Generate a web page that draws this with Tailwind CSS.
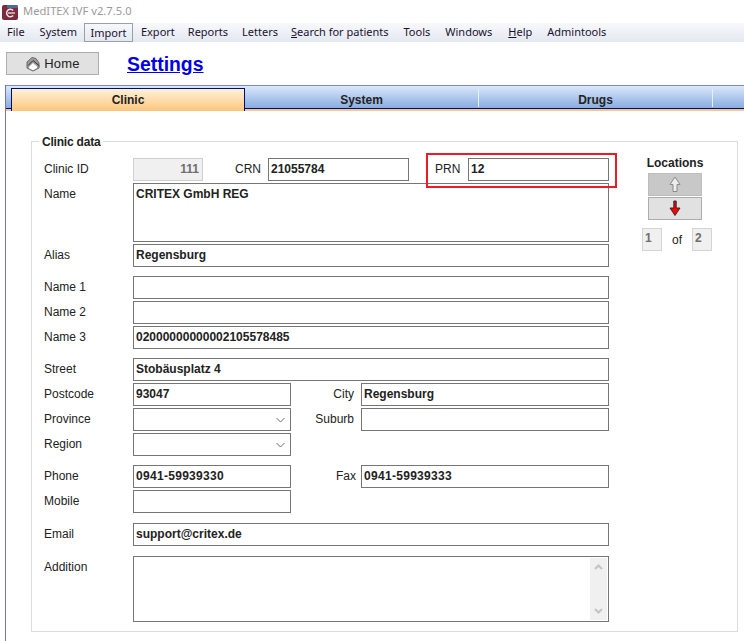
<!DOCTYPE html>
<html>
<head>
  <meta charset="UTF-8">
  <title>MedITEX IVF</title>
  <script src="https://cdn.jsdelivr.net/npm/@tailwindcss/browser@4"></script>
</head>
<body class="bg-white">
<div class="relative w-[744px] h-[641px] overflow-hidden bg-white font-['Liberation_Sans',Arial,sans-serif] text-[12px] text-[#222]">

  <!-- window title -->
  <div class="flex items-center h-[23px] pl-[2px]">
    <svg width="16" height="16" viewBox="0 0 16 16" class="mt-[1px]">
      <rect x="0" y="1" width="16" height="15" rx="2" fill="#7b2b3c"/>
      <path d="M5 1 H14 Q16 1 16 3 V4 H5 Z" fill="#4a6a9c"/>
      <path d="M11.2 6.4 A3.8 3.8 0 1 0 11.2 11.6" fill="none" stroke="#f4e4e8" stroke-width="1.5"/>
      <path d="M6 9h7" stroke="#f4e4e8" stroke-width="1.3"/>
    </svg>
    <span class="ml-[5px] font-['Noto_Sans',sans-serif] text-[11.2px] text-[#9a9a9a]">MedITEX IVF v2.7.5.0</span>
  </div>

  <!-- menu bar -->
  <div class="flex items-center h-[19px] bg-gradient-to-b from-[#f7f9fc] to-[#e3e8f0] font-['Noto_Sans',sans-serif] text-[11px] text-[#1a1030]">
    <span class="ml-[7px]">File</span>
    <span class="ml-[15px]">System</span>
    <span class="ml-[7px] px-[5.5px] h-[19px] leading-[17px] border border-[#9aa0a8]">Import</span>
    <span class="ml-[8px]">Export</span>
    <span class="ml-[13px]">Reports</span>
    <span class="ml-[14px]">Letters</span>
    <span class="ml-[13px]"><u>S</u>earch for patients</span>
    <span class="ml-[15px]">Tools</span>
    <span class="ml-[15px]">Windows</span>
    <span class="ml-[16px]"><u>H</u>elp</span>
    <span class="ml-[15px]">Admintools</span>
  </div>

  <!-- home + title -->
  <div class="flex items-center h-[43px] pl-[6px]">
    <button class="flex items-center justify-center gap-[3px] w-[93px] h-[23px] bg-[#e1e1e1] border border-[#adadad] text-[#222]">
      <svg width="16" height="16" viewBox="0 0 16 16">
        <path d="M2 6 L7 1.5 L11 2.5 L14 7 L14 12 L8 15 L2 12 Z" fill="#9c9c9c" stroke="#6a6a6a" stroke-width="1"/>
        <path d="M4 11 L8 7 L12 10.5 L12 12 L8 14.2 L4 12.2 Z" fill="#fff"/>
        <path d="M8 4.5 L14.5 10 M8 4.5 L3 9.5" fill="none" stroke="#333" stroke-width="1"/>
      </svg>
      <span class="text-[13px] tracking-[0.2px]">Home</span>
    </button>
    <a class="ml-[28px] mt-[3px] text-[19.4px] font-bold text-[#0000e6] underline">Settings</a>
  </div>

  <!-- tabs -->
  <div class="ml-[5px] border-l border-[#7276b8] h-[556px]">
    <div class="relative flex h-[26px] pl-[5px] pt-[2px] border-t border-[#7a8cc4] bg-gradient-to-b from-[#dbe8fa] to-[#7ea4dc] after:absolute after:left-0 after:right-0 after:bottom-0 after:h-[2px] after:bg-[#f5c98a]">
      <div class="relative z-10 w-[234px] h-[23px] pb-[1px] flex items-center justify-center font-bold border border-b-0 border-[#000a78] bg-gradient-to-b from-[#fff1d8] to-[#fdc67c]">Clinic</div>
      <div class="w-[234px] h-[18px] mt-[1px] pt-[4px] leading-[14px] text-center font-bold border-r border-[#e6eefa]">System</div>
      <div class="w-[234px] h-[18px] mt-[1px] pt-[4px] leading-[14px] text-center font-bold border-r border-[#e6eefa]">Drugs</div>
      <div class="absolute left-0 right-0 bottom-[2px] h-[1px] bg-[#000a78]"></div>
    </div>

    <!-- clinic data -->
    <fieldset class="mt-[22px] ml-[25px] w-[707px] h-[499px] border border-[#dcdcdc]">
      <legend class="ml-[7px] px-[3px] pt-[2px] font-bold leading-[14px] tracking-[-0.2px] text-[#222]">Clinic data</legend>
      <div class="flex pl-[12px] pt-[9px]">

        <div class="w-[565px] flex flex-col gap-[2px]">
          <div class="flex items-center h-[23px]">
            <span class="w-[89px] pb-[2px]">Clinic ID</span>
            <div class="w-[70px] h-[23px] leading-[21px] text-right pr-[3px] font-bold text-[#6e6e6e] bg-[#f0f0f0] border border-[#cfcfcf]">111</div>
            <span class="ml-[32px] w-[33px] pb-[2px]">CRN</span>
            <div class="w-[141px] h-[23px] leading-[21px] px-[2px] font-bold border border-[#767676]">21055784</div>
            <span class="ml-[26px] w-[33px] pb-[2px]">PRN</span>
            <div class="w-[141px] h-[23px] leading-[21px] px-[2px] font-bold border border-[#767676]">12</div>
          </div>
          <div class="flex h-[59px]">
            <span class="w-[89px] pt-[2px]">Name</span>
            <div class="w-[476px] px-[2px] pt-[1px] font-bold border border-[#767676]">CRITEX GmbH REG</div>
          </div>
          <div class="flex items-center h-[23px]">
            <span class="w-[89px] pb-[2px]">Alias</span>
            <div class="w-[476px] h-[23px] leading-[21px] px-[2px] font-bold border border-[#767676]">Regensburg</div>
          </div>
          <div class="flex items-center h-[23px] mt-[7px]">
            <span class="w-[89px] pb-[2px]">Name 1</span>
            <div class="w-[476px] h-[23px] border border-[#767676]"></div>
          </div>
          <div class="flex items-center h-[23px]">
            <span class="w-[89px] pb-[2px]">Name 2</span>
            <div class="w-[476px] h-[23px] border border-[#767676]"></div>
          </div>
          <div class="flex items-center h-[23px]">
            <span class="w-[89px] pb-[2px]">Name 3</span>
            <div class="w-[476px] h-[23px] leading-[21px] px-[2px] font-bold border border-[#767676]">02000000000002105578485</div>
          </div>
          <div class="flex items-center h-[23px] mt-[7px]">
            <span class="w-[89px] pb-[2px]">Street</span>
            <div class="w-[476px] h-[23px] leading-[21px] px-[2px] font-bold border border-[#767676]">Stobäusplatz 4</div>
          </div>
          <div class="flex items-center h-[23px]">
            <span class="w-[89px] pb-[2px]">Postcode</span>
            <div class="w-[158px] h-[23px] leading-[21px] px-[2px] font-bold border border-[#767676]">93047</div>
            <span class="w-[70px] pr-[7px] pb-[2px] text-right">City</span>
            <div class="w-[248px] h-[23px] leading-[21px] px-[2px] font-bold border border-[#767676]">Regensburg</div>
          </div>
          <div class="flex items-center h-[23px]">
            <span class="w-[89px] pb-[2px]">Province</span>
            <div class="w-[158px] h-[23px] flex items-center justify-end pr-[5px] border border-[#767676]">
              <svg width="9" height="6" viewBox="0 0 9 6"><path d="M0.5 1 L4.5 5 L8.5 1" fill="none" stroke="#6a6a6a" stroke-width="1"/></svg>
            </div>
            <span class="w-[70px] pr-[7px] pb-[2px] text-right">Suburb</span>
            <div class="w-[248px] h-[23px] border border-[#767676]"></div>
          </div>
          <div class="flex items-center h-[23px]">
            <span class="w-[89px] pb-[2px]">Region</span>
            <div class="w-[158px] h-[23px] flex items-center justify-end pr-[5px] border border-[#767676]">
              <svg width="9" height="6" viewBox="0 0 9 6"><path d="M0.5 1 L4.5 5 L8.5 1" fill="none" stroke="#6a6a6a" stroke-width="1"/></svg>
            </div>
          </div>
          <div class="flex items-center h-[23px] mt-[7px]">
            <span class="w-[89px] pb-[2px]">Phone</span>
            <div class="w-[158px] h-[23px] leading-[21px] px-[2px] font-bold tracking-[0.3px] border border-[#767676]">0941-59939330</div>
            <span class="w-[70px] pr-[5px] pb-[2px] text-right">Fax</span>
            <div class="w-[248px] h-[23px] leading-[21px] px-[2px] font-bold tracking-[0.3px] border border-[#767676]">0941-59939333</div>
          </div>
          <div class="flex items-center h-[23px]">
            <span class="w-[89px] pb-[2px]">Mobile</span>
            <div class="w-[158px] h-[23px] border border-[#767676]"></div>
          </div>
          <div class="flex items-center h-[23px] mt-[8px]">
            <span class="w-[89px] pb-[2px]">Email</span>
            <div class="w-[476px] h-[23px] leading-[21px] px-[2px] font-bold border border-[#767676]">support@critex.de</div>
          </div>
          <div class="flex h-[66px] mt-[8px]">
            <span class="w-[89px] pt-[2px]">Addition</span>
            <div class="w-[476px] flex justify-end p-[1px] border border-[#767676]">
              <div class="w-[17px] flex flex-col items-center justify-between py-[6px] bg-[#f0f0f0]">
                <svg width="9" height="6" viewBox="0 0 9 6"><path d="M1 5 L4.5 1.5 L8 5" fill="none" stroke="#c4c4c4" stroke-width="2"/></svg>
                <svg width="9" height="6" viewBox="0 0 9 6"><path d="M1 1 L4.5 4.5 L8 1" fill="none" stroke="#c4c4c4" stroke-width="2"/></svg>
              </div>
            </div>
          </div>
        </div>

        <!-- locations -->
        <div class="ml-[33px] w-[70px] flex flex-col items-center">
          <div class="mr-[4px] font-bold leading-[14px] -mt-[2px]">Locations</div>
          <button class="mr-[4px] mt-[3px] w-[54px] h-[23px] flex items-center justify-center bg-[#c8c8c8] border border-[#bdbdbd]">
            <svg width="12" height="17" viewBox="0 0 12 17"><path d="M6 1 L11 8.5 L8 8.5 L8 15.5 L4 15.5 L4 8.5 L1 8.5 Z" fill="#eeeeee" stroke="#8a8a8a"/></svg>
          </button>
          <button class="mr-[4px] mt-[1px] w-[54px] h-[23px] flex items-center justify-center bg-[#e1e1e1] border border-[#adadad]">
            <svg width="12" height="17" viewBox="0 0 12 17"><path d="M4.8 1 L7.2 1 L7.2 8 L11 8 L6 15.5 L1 8 L4.8 8 Z" fill="#ff0000" stroke="#222" stroke-width="0.9"/></svg>
          </button>
          <div class="mt-[8px] flex items-center w-[70px]">
            <div class="w-[20px] h-[23px] pl-[2px] leading-[19px] font-bold text-[#6e6e6e] bg-[#f0f0f0] border border-[#d4d4d4]">1</div>
            <span class="w-[30px] text-center">of</span>
            <div class="w-[20px] h-[23px] pl-[2px] leading-[19px] font-bold text-[#6e6e6e] bg-[#f0f0f0] border border-[#d4d4d4]">2</div>
          </div>
        </div>
      </div>
    </fieldset>
  </div>

  <!-- annotation around PRN -->
  <div class="absolute left-[426px] top-[153px] w-[191px] h-[35px] border-2 border-[#ed1c24]"></div>
</div>
</body>
</html>
